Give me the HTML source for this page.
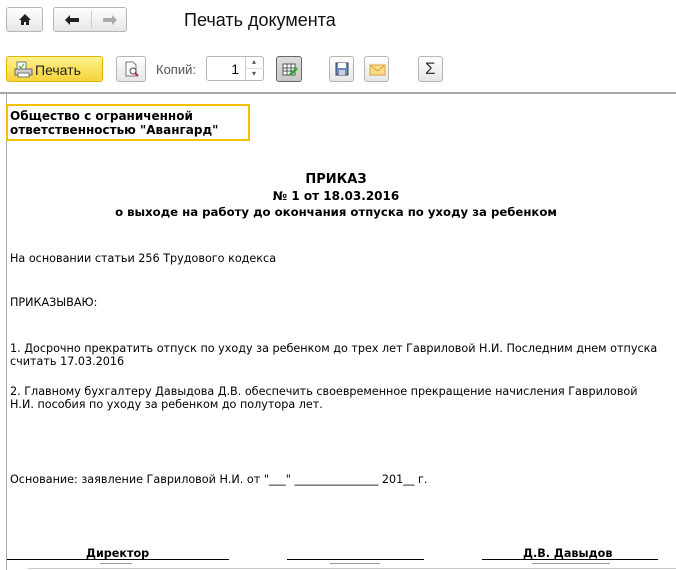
<!DOCTYPE html>
<html><head><meta charset="utf-8"><style>
body{margin:0;width:676px;height:570px;overflow:hidden;background:#fff;font-family:"Liberation Sans",sans-serif;position:relative}
.a{position:absolute}
.btn{position:absolute;border:1px solid #b5b5b5;border-radius:3px;background:linear-gradient(#fff,#e6e6e6);box-sizing:border-box}
.d{position:absolute;font-family:"DejaVu Sans",sans-serif;font-size:11.2px;color:#000;white-space:nowrap;line-height:13px}
.b{font-weight:bold}
.c{left:6px;width:660px;text-align:center}
</style></head><body>
<div class="btn" style="left:6px;top:7px;width:37px;height:25px"><svg class="a" style="left:11px;top:5px" width="14" height="13"><path d="M7 1L1 7h2v5h3V9h2v3h3V7h2z" fill="#222"/></svg></div>
<div class="btn" style="left:53px;top:7px;width:74px;height:25px"><div class="a" style="left:37px;top:3px;width:1px;height:17px;background:#ccc"></div><svg class="a" style="left:10px;top:6px" width="16" height="12"><path d="M1 6l5-5v3h9v4H6v3z" fill="#222"/></svg><svg class="a" style="left:48px;top:6px" width="16" height="12"><path d="M15 6l-5-5v3H1v4h9v3z" fill="#aaa"/></svg></div>
<div class="a" style="left:184px;top:10px;font-size:18px;color:#111">Печать документа</div>
<div class="btn" style="left:6px;top:56px;width:97px;height:26px;background:linear-gradient(#fff28a,#f5d33a);border-color:#e0b400"><svg class="a" style="left:7px;top:4px" width="20" height="17"><rect x="3" y="1" width="9" height="8" fill="#fff" stroke="#777"/><path d="M5 5l2 2 3-4" stroke="#2a2" fill="none"/><rect x="1" y="8" width="17" height="6" fill="#ccc" stroke="#666"/><rect x="4" y="12" width="11" height="4" fill="#fff" stroke="#777"/></svg><span class="a" style="left:28px;top:5px;font-size:14px;color:#222">Печать</span></div>
<div class="btn" style="left:116px;top:56px;width:30px;height:26px"><svg class="a" style="left:7px;top:4px" width="16" height="17"><path d="M2 1h7l3 3v11H2z" fill="#fff" stroke="#777"/><circle cx="9" cy="10" r="3" fill="none" stroke="#446"/><path d="M11 12l3 3" stroke="#a33" stroke-width="2"/></svg></div>
<div class="a" style="left:156px;top:62px;font-size:13px;color:#555">Копий:</div>
<div class="a" style="left:206px;top:56px;width:58px;height:25px;border:1px solid #b5b5b5;border-radius:3px;box-sizing:border-box"><span class="a" style="right:24px;top:4px;font-size:14px">1</span><div class="a" style="left:38px;top:0;width:1px;height:23px;background:#ccc"></div><div class="a" style="left:39px;top:11px;width:18px;height:1px;background:#ddd"></div><span class="a" style="left:45px;top:0;font-size:8px;color:#555">▴</span><span class="a" style="left:45px;top:12px;font-size:8px;color:#555">▾</span></div>
<div class="btn" style="left:276px;top:56px;width:26px;height:26px;background:linear-gradient(#ddd,#c8c8c8);border-color:#666"><svg class="a" style="left:5px;top:5px" width="16" height="15"><rect x="1" y="2" width="12" height="11" fill="#fff" stroke="#555"/><path d="M1 6h12M1 9h12M5 2v11M9 2v11" stroke="#555"/><path d="M7 12l7-7 2 2-7 7z" fill="#3a3"/></svg></div>
<div class="btn" style="left:329px;top:56px;width:25px;height:26px"><svg class="a" style="left:5px;top:5px" width="14" height="14"><rect x="1" y="1" width="12" height="12" fill="#6a8ab8" stroke="#345"/><rect x="3" y="1" width="8" height="5" fill="#fff"/><rect x="4" y="8" width="6" height="5" fill="#ccd"/></svg></div>
<div class="btn" style="left:364px;top:56px;width:25px;height:26px"><svg class="a" style="left:4px;top:7px" width="17" height="12"><rect x="1" y="1" width="15" height="10" fill="#fbdc8a" stroke="#d9a23a"/><path d="M1 1l7.5 6L16 1" fill="none" stroke="#d9a23a"/></svg></div>
<div class="btn" style="left:418px;top:56px;width:25px;height:26px"><span class="a" style="left:6px;top:2px;font-size:17px;color:#333">Σ</span></div>
<div class="a" style="left:0;top:92px;width:676px;height:2px;background:#a8a8a8"></div>
<div class="a" style="left:6px;top:94px;width:1px;height:476px;background:#aaa"></div>
<div class="a" style="left:28px;top:568px;width:648px;height:1px;background:#ccc"></div>
<div class="a" style="left:6px;top:104px;width:244px;height:37px;border:2px solid #f5c000;box-sizing:border-box"></div>
<div class="d b" style="left:10px;top:109px;font-size:12px;line-height:14px">Общество с ограниченной<br>ответственностью "Авангард"</div>
<div class="d b c" style="top:172px;font-size:13px;line-height:15px">ПРИКАЗ</div>
<div class="d b c" style="top:189px;font-size:12px;line-height:15px">№ 1 от 18.03.2016</div>
<div class="d b c" style="top:205px;font-size:11.7px;line-height:15px">о выходе на работу до окончания отпуска по уходу за ребенком</div>
<div class="d" style="left:10px;top:252px">На основании статьи 256 Трудового кодекса</div>
<div class="d" style="left:10px;top:296px">ПРИКАЗЫВАЮ:</div>
<div class="d" style="left:10px;top:342px">1. Досрочно прекратить отпуск по уходу за ребенком до трех лет Гавриловой Н.И. Последним днем отпуска<br>считать 17.03.2016</div>
<div class="d" style="left:10px;top:385px">2. Главному бухгалтеру Давыдова Д.В. обеспечить своевременное прекращение начисления Гавриловой<br>Н.И. пособия по уходу за ребенком до полутора лет.</div>
<div class="d" style="left:10px;top:473px">Основание: заявление Гавриловой Н.И. от "___" _______________ 201__ г.</div>
<div class="d b" style="left:86px;top:547px">Директор</div>
<div class="d b" style="left:523px;top:547px">Д.В. Давыдов</div>
<div class="a" style="left:7px;top:559px;width:222px;height:1px;background:#000"></div>
<div class="a" style="left:287px;top:559px;width:137px;height:1px;background:#000"></div>
<div class="a" style="left:482px;top:559px;width:176px;height:1px;background:#000"></div>
<div class="a" style="left:100px;top:563px;width:32px;height:1px;background:#999"></div>
<div class="a" style="left:330px;top:563px;width:50px;height:1px;background:#999"></div>
<div class="a" style="left:532px;top:563px;width:78px;height:1px;background:#999"></div>
</body></html>
